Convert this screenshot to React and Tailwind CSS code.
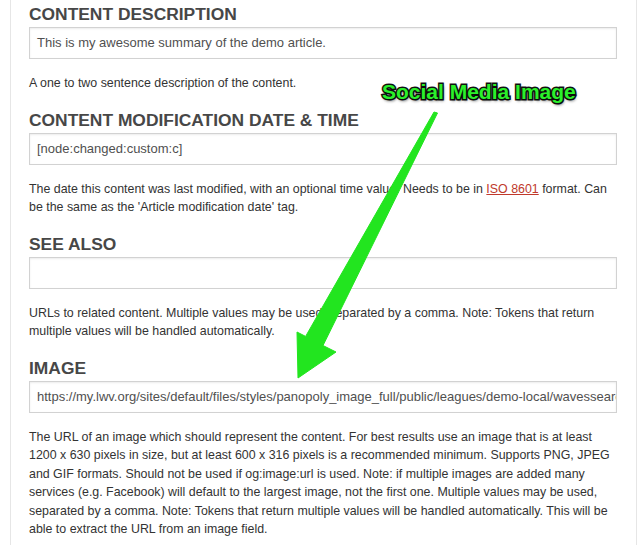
import React from "react";

const FONT = { fontFamily: '"Liberation Sans", Arial, sans-serif' };

// One labelled field: heading, read-only text box, help text
function Field({ title, value, children, first }) {
  return (
    <div className={first ? "" : "mt-[16px]"}>
      <h2 className="text-[17.4px] leading-[22px] font-bold text-[#474747] uppercase">{title}</h2>
      <div className="mt-[2px] h-[32px] border border-[#d2d2d2] shadow-[inset_0_1px_2px_rgba(0,0,0,0.08)] px-[7px] flex items-center overflow-hidden whitespace-nowrap text-[13px] text-[#505050]">
        {value}
      </div>
      <p className="mt-[15px] text-[12.4px] leading-[18.5px] text-[#333]">{children}</p>
    </div>
  );
}

export default function App() {
  return (
    <div className="relative w-[642px] h-[545px] overflow-hidden bg-white" style={FONT}>
      <div className="ml-[10px] w-[627px] min-h-[545px] border-x border-[#e6e6e6] pl-[18px] pr-[19px] pt-[3px]">
        <Field first title="Content Description" value="This is my awesome summary of the demo article.">
          A one to two sentence description of the content.
        </Field>

        <Field title="Content Modification Date & Time" value="[node:changed:custom:c]">
          The date this content was last modified, with an optional time value. Needs to be in{" "}
          <a className="text-[#c0392b] underline">ISO 8601</a> format. Can be the same as the 'Article
          modification date' tag.
        </Field>

        <Field title="See Also" value="">
          URLs to related content. Multiple values may be used, separated by a comma. Note: Tokens that
          return multiple values will be handled automatically.
        </Field>

        <Field
          title="Image"
          value="https://my.lwv.org/sites/default/files/styles/panopoly_image_full/public/leagues/demo-local/wavessearch.jpg"
        >
          The URL of an image which should represent the content. For best results use an image that is at
          least 1200 x 630 pixels in size, but at least 600 x 316 pixels is a recommended minimum. Supports
          PNG, JPEG and GIF formats. Should not be used if og:image:url is used. Note: if multiple images are
          added many services (e.g. Facebook) will default to the largest image, not the first one. Multiple
          values may be used, separated by a comma. Note: Tokens that return multiple values will be handled
          automatically. This will be able to extract the URL from an image field.
        </Field>
      </div>

      {/* annotation overlay */}
      <svg className="absolute left-0 top-0 pointer-events-none" width="642" height="545">
        <polygon
          points="434,112 437.5,113 323,345.5 336,352 298,378 297,332 305.6,336.4"
          fill="#22e51f"
          stroke="#22e51f"
          strokeWidth="1"
          strokeLinejoin="round"
        />
      </svg>
      <div className="absolute left-[382px] top-[79px] text-[21px] leading-[26px] font-bold text-[#2bf02b] [-webkit-text-stroke:3px_#111] [paint-order:stroke_fill] [text-shadow:1px_2px_3px_rgba(0,0,0,0.6)]">
        Social Media Image
      </div>
    </div>
  );
}
